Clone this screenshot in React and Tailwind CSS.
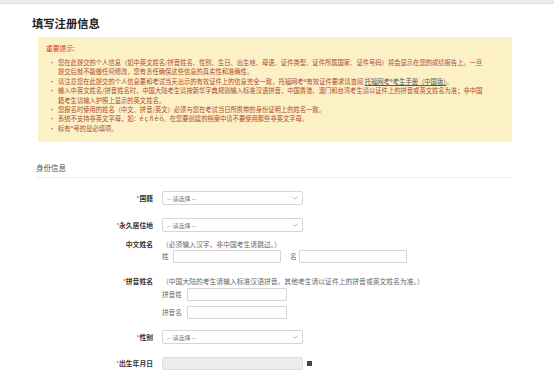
import React from 'react';

const notes = [
  ['您在此提交的个人信息（如中英文姓名/拼音姓名、性别、生日、出生地、母语、证件类型、证件所属国家、证件号码）将会显示在您的成绩报告上。一旦', '提交后就不能做任何修改，您有责任确保这些信息的真实性和准确性。'],
  ['请注意您在此提交的个人信息要和考试当天出示的有效证件上的信息完全一致，托福网考®有效证件要求请查阅 ', 'LINK'],
  ['输入中英文姓名/拼音姓名时，中国大陆考生请按新华字典规则输入标准汉语拼音，中国香港、澳门和台湾考生请以证件上的拼音或英文姓名为准；非中国', '籍考生请输入护照上显示的英文姓名。'],
  ['您报名时使用的姓名（中文、拼音/英文）必须与您在考试当日所携带的身份证明上的姓名一致。'],
  ['系统不支持非英文字母，如：é ç ñ è ö。在您要创建的档案中请不要使用那些非英文字母。'],
  ['标有*号的是必填项。'],
];

const Label = ({ text, req }) => (
  <div className="w-[117px] shrink-0 text-right font-bold text-[#333] text-[6.8px] leading-[14px]">
    {req && <span className="text-[#e53935] text-[5px] align-top">*</span>}
    {text}
  </div>
);

const Select = () => (
  <div className="w-[141px] h-[14px] border border-[#d6d6d6] rounded-[2px] bg-white flex items-center justify-between px-[4px]">
    <span className="text-[6px] text-[#777]">-- 请选择 --</span>
    <svg width="6" height="4" viewBox="0 0 6 4"><path d="M0.5 0.8 L3 3.2 L5.5 0.8" fill="none" stroke="#999" strokeWidth="0.7" /></svg>
  </div>
);

const Input = ({ w }) => (
  <div className={`${w} h-[13px] border border-[#d6d6d6] rounded-[1px] bg-white`} />
);

export default function App() {
  return (
    <div className="w-[554px] h-[379px] bg-white overflow-hidden" style={{ fontFamily: '"Noto Sans CJK SC", "Noto Sans", sans-serif' }}>
      <div className="h-[4px] bg-[#ebebeb] border-b border-[#dcdcdc]" />
      <div className="pl-[32px] mt-[12px] text-[11.3px] leading-[14px] font-bold text-[#222]">填写注册信息</div>

      <div className="ml-[38px] w-[474px] mt-[7px] bg-[#fcf0c6] pt-[6px] pb-[9px] pl-[8px]">
        <div className="text-[#e8322d] text-[6.8px] leading-[10px]">重要提示:</div>
        <div className="mt-[5px] text-[#ad4a32] text-[6.3px] leading-[9.4px] whitespace-nowrap">
          {notes.map((n, i) => (
            <div key={i} className="flex">
              <span className="w-[12px] text-center shrink-0">•</span>
              <div>
                <div>{n[0]}{n[1] === 'LINK' && <span className="underline text-[#555]">托福网考®考生手册（中国版）</span>}{n[1] === 'LINK' && '。'}</div>
                {n[1] && n[1] !== 'LINK' && <div>{n[1]}</div>}
              </div>
            </div>
          ))}
        </div>
      </div>

      <div className="ml-[36px] w-[476px] mt-[20px] border-b border-[#eeeeee] pb-[3px] text-[7.5px] leading-[12px] text-[#555]">身份信息</div>

      <div className="ml-[36px] mt-[13px] flex flex-col">
        <div className="flex items-center gap-[9px]">
          <Label text="国籍" req />
          <Select />
        </div>
        <div className="flex items-center gap-[9px] mt-[13px]">
          <Label text="永久居住地" req />
          <Select />
        </div>
        <div className="flex gap-[9px] mt-[5px]">
          <Label text="中文姓名" />
          <div className="flex flex-col">
            <div className="text-[6.8px] leading-[14px] text-[#666]">（必须输入汉字，非中国考生请跳过。）</div>
            <div className="flex items-center text-[6.6px] text-[#666] -mt-[1px]">
              <span className="w-[11px]">姓</span>
              <Input w="w-[108px]" />
              <span className="ml-[9px] w-[9px]">名</span>
              <Input w="w-[108px]" />
            </div>
          </div>
        </div>
        <div className="flex gap-[9px] mt-[11px]">
          <Label text="拼音姓名" req />
          <div className="flex flex-col">
            <div className="text-[6.8px] leading-[14px] text-[#666]">（中国大陆的考生请输入标准汉语拼音。其他考生请以证件上的拼音或英文姓名为准。）</div>
            <div className="flex items-center text-[6.6px] text-[#666]">
              <span className="w-[25px]">拼音姓</span>
              <Input w="w-[100px]" />
            </div>
            <div className="flex items-center text-[6.6px] text-[#666] mt-[5px]">
              <span className="w-[25px]">拼音名</span>
              <Input w="w-[100px]" />
            </div>
          </div>
        </div>
        <div className="flex items-center gap-[9px] mt-[11px]">
          <Label text="性别" req />
          <Select />
        </div>
        <div className="flex items-center gap-[9px] mt-[12px]">
          <Label text="出生年月日" req />
          <div className="w-[141px] h-[13px] border border-[#dedede] rounded-[2px] bg-[#ececec]" />
          <div className="-ml-[5px] w-[5px] h-[5px] bg-[#444]" />
        </div>
      </div>
    </div>
  );
}
